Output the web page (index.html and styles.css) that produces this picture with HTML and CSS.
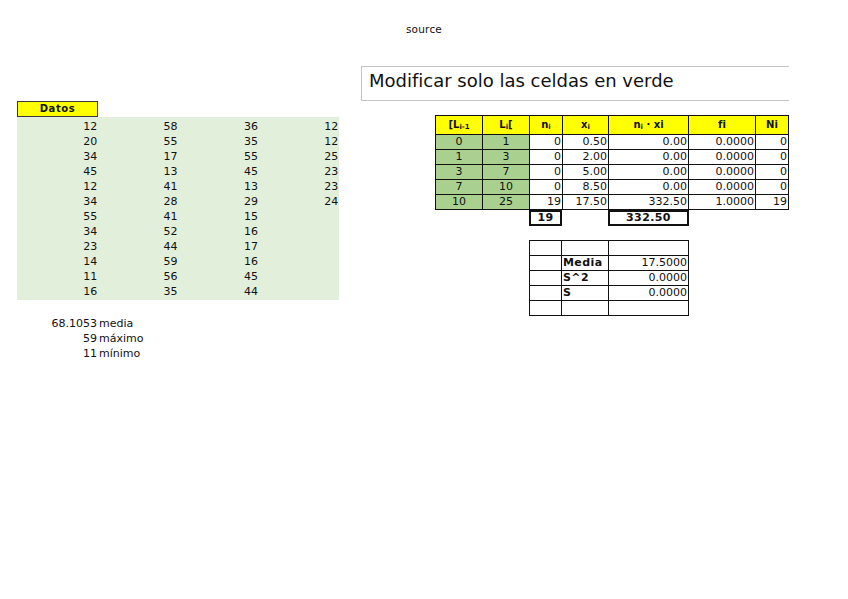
FILE: index.html
```html
<!DOCTYPE html>
<html lang="es">
<head>
<meta charset="utf-8">
<title>Tabla de frecuencias</title>
<link rel="stylesheet" href="styles.css">
</head>
<body>
<div class="source">source</div>
<div class="main">
  <div class="left">
    <div class="datos">Datos</div>
    <div class="data">
      <span>12</span><span>58</span><span>36</span><span>12</span>
      <span>20</span><span>55</span><span>35</span><span>12</span>
      <span>34</span><span>17</span><span>55</span><span>25</span>
      <span>45</span><span>13</span><span>45</span><span>23</span>
      <span>12</span><span>41</span><span>13</span><span>23</span>
      <span>34</span><span>28</span><span>29</span><span>24</span>
      <span>55</span><span>41</span><span>15</span><span></span>
      <span>34</span><span>52</span><span>16</span><span></span>
      <span>23</span><span>44</span><span>17</span><span></span>
      <span>14</span><span>59</span><span>16</span><span></span>
      <span>11</span><span>56</span><span>45</span><span></span>
      <span>16</span><span>35</span><span>44</span><span></span>
    </div>
    <div class="stats">
      <span class="num">68.1053</span><span>media</span>
      <span class="num">59</span><span>máximo</span>
      <span class="num">11</span><span>mínimo</span>
    </div>
  </div>
  <div class="right">
    <div class="title">Modificar solo las celdas en verde</div>
    <div class="freq">
      <div class="h">[L<sub>i-1</sub></div>
      <div class="h">L<sub>i</sub>[</div>
      <div class="h">n<sub>i</sub></div>
      <div class="h">x<sub>i</sub></div>
      <div class="h">n<sub>i</sub> · xi</div>
      <div class="h">fi</div>
      <div class="h">Ni</div>

      <div class="g">0</div><div class="g">1</div><div class="n">0</div><div class="n">0.50</div><div class="n">0.00</div><div class="n">0.0000</div><div class="n">0</div>
      <div class="g">1</div><div class="g">3</div><div class="n">0</div><div class="n">2.00</div><div class="n">0.00</div><div class="n">0.0000</div><div class="n">0</div>
      <div class="g">3</div><div class="g">7</div><div class="n">0</div><div class="n">5.00</div><div class="n">0.00</div><div class="n">0.0000</div><div class="n">0</div>
      <div class="g">7</div><div class="g">10</div><div class="n">0</div><div class="n">8.50</div><div class="n">0.00</div><div class="n">0.0000</div><div class="n">0</div>
      <div class="g">10</div><div class="g">25</div><div class="n">19</div><div class="n">17.50</div><div class="n">332.50</div><div class="n">1.0000</div><div class="n">19</div>
    </div>
    <div class="totals">
      <div class="tot tot-n">19</div>
      <div class="tot tot-x">332.50</div>
    </div>
    <div class="summary">
      <div></div><div></div><div></div>
      <div></div><div class="lbl">Media</div><div class="n">17.5000</div>
      <div></div><div class="lbl">S^2</div><div class="n">0.0000</div>
      <div></div><div class="lbl">S</div><div class="n">0.0000</div>
      <div></div><div></div><div></div>
    </div>
  </div>
</div>
</body>
</html>
```
FILE: styles.css
```css
* { box-sizing: border-box; }
body {
  margin: 0;
  font-family: "DejaVu Sans", "Liberation Sans", sans-serif;
  color: #111;
  background: #fff;
  width: 848px;
  height: 599px;
}
.source {
  text-align: center;
  font-size: 10.5px;
  line-height: 12px;
  padding-top: 23px;
  letter-spacing: 0.2px;
}
.main {
  display: flex;
  align-items: flex-start;
  padding-left: 17px;
  margin-top: 31px;
}
.left {
  width: 322px;
  margin-right: 22px;
  margin-top: 35px;
}
.datos {
  width: 81px;
  height: 16px;
  background: #ffff00;
  border: 1px solid #3a3a3a;
  font-weight: bold;
  font-size: 10px;
  line-height: 14px;
  text-align: center;
  letter-spacing: 0.6px;
}
.data {
  background: #e2efda;
  display: grid;
  grid-template-columns: repeat(4, 80.3px);
  grid-auto-rows: 15px;
  padding: 2px 0 1px;
  font-size: 11px;
  line-height: 15px;
}
.data span { text-align: right; }
.stats {
  margin-top: 16px;
  display: grid;
  grid-template-columns: 80px auto;
  column-gap: 2px;
  font-size: 11px;
  line-height: 15px;
}
.stats .num { text-align: right; }
.right { width: 428px; }
.title {
  height: 35px;
  border: 1px solid #c4c4c4;
  border-right: 0;
  font-size: 18px;
  line-height: 22px;
  padding: 3px 0 0 7px;
  color: #111;
}
.freq {
  margin: 14px 0 0 74px;
  width: 354px;
  display: grid;
  grid-template-columns: 46px 46px 32px 45px 79px 66px 32px;
  grid-template-rows: 18px repeat(5, 14px);
  gap: 1px;
  padding: 1px;
  background: #111;
  font-size: 11px;
  line-height: 14px;
}
.freq > div { background: #fff; }
.freq .h {
  background: #ffff00;
  font-weight: bold;
  font-size: 10px;
  line-height: 18px;
  text-align: center;
}
.freq sub {
  font-size: 7px;
  vertical-align: -1px;
  line-height: 0;
}
.freq .g { background: #a9d08e; text-align: center; }
.n { text-align: right; padding-right: 1px; }
.totals {
  margin-left: 74px;
  width: 354px;
  display: grid;
  grid-template-columns: 46px 46px 32px 45px 79px 66px 32px;
  column-gap: 1px;
  padding: 0 1px;
  height: 16px;
}
.tot {
  border: 2px solid #111;
  font-weight: bold;
  font-size: 11px;
  line-height: 12px;
  margin: 0 -1px;
  letter-spacing: 0.4px;
}
.tot-n { grid-column: 3; text-align: center; margin-right: 0; }
.tot-x { grid-column: 5; text-align: center; }
.summary {
  margin: 14px 0 0 168px;
  width: 160px;
  display: grid;
  grid-template-columns: 31px 46px 79px;
  grid-auto-rows: 14px;
  gap: 1px;
  padding: 1px;
  background: #111;
  font-size: 11px;
  line-height: 14px;
}
.summary > div { background: #fff; }
.summary .lbl { font-weight: bold; padding-left: 1px; letter-spacing: 0.4px; }
```
